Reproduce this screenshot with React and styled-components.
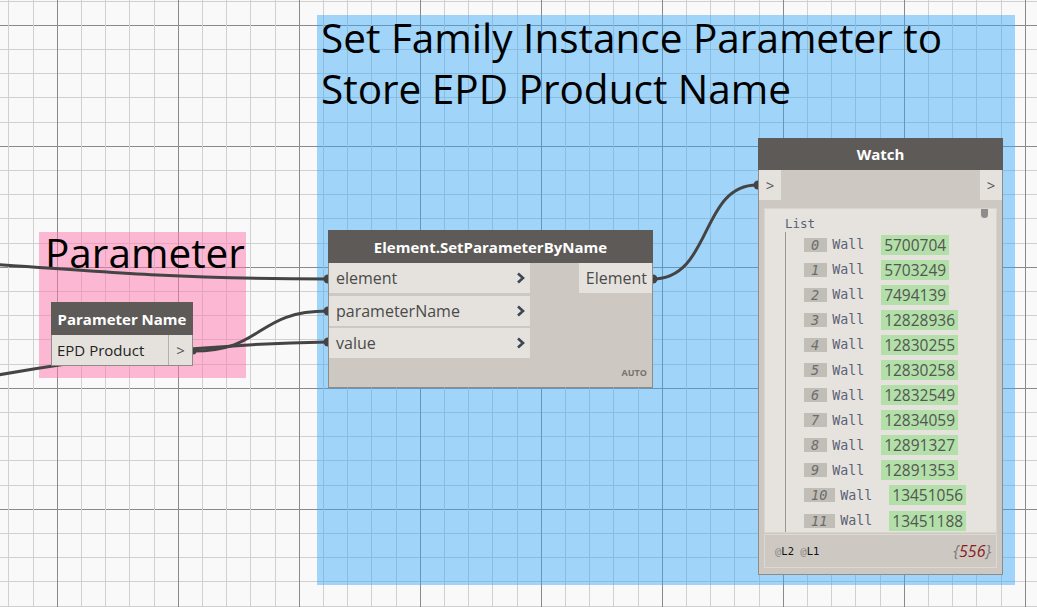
import styled, { createGlobalStyle } from "styled-components";

const GlobalStyle = createGlobalStyle`
  html, body {
    margin: 0;
    padding: 0;
    overflow: hidden;
  }
`;

const watchItems = [
  "5700704",
  "5703249",
  "7494139",
  "12828936",
  "12830255",
  "12830258",
  "12832549",
  "12834059",
  "12891327",
  "12891353",
  "13451056",
  "13451188",
];

function Chevron() {
  return (
    <svg width="9" height="12" viewBox="0 0 9 12">
      <polyline
        points="2,1.5 7,6 2,10.5"
        fill="none"
        stroke="#3c4654"
        strokeWidth="2.6"
        strokeLinejoin="miter"
      />
    </svg>
  );
}

export default function App() {
  return (
    <>
      <GlobalStyle />
      <Canvas>
        <Group $x={317} $y={15} $w={698} $h={570} $pad={4} $color="rgba(51, 167, 247, 0.45)">
          <GroupTitle $offset={-3}>
            Set Family Instance Parameter to
            <br />
            Store EPD Product Name
          </GroupTitle>
        </Group>
        <Group $x={39} $y={232} $w={207} $h={146} $pad={6} $color="rgba(255, 119, 171, 0.5)">
          <GroupTitle $offset={-5}>Parameter</GroupTitle>
        </Group>

        <Wires width="1037" height="607">
          <g fill="none" stroke="#444" strokeWidth="3" strokeLinecap="round">
            <path d="M -120 256 C 150 276, 200 279, 328 279" />
            <path d="M -30 380 C 90 358, 200 344, 328 342" />
            <path d="M 193 351 C 265 351, 255 311, 328 311" />
            <path d="M 653 279 C 712 279, 700 185, 757 185" />
          </g>
          <g fill="#444">
            <circle cx="328" cy="279" r="4.5" />
            <circle cx="328" cy="311" r="4.5" />
            <circle cx="328" cy="342" r="4.5" />
            <circle cx="653" cy="279" r="4.5" />
            <circle cx="758" cy="185" r="4.5" />
            <circle cx="193" cy="351" r="3.5" />
          </g>
        </Wires>

        <Node $x={51} $y={302} $w={142}>
          <NodeHeader $h={33}>Parameter Name</NodeHeader>
          <StringBody>
            <StringInput>EPD Product</StringInput>
            <PortArrow $w={23}>&gt;</PortArrow>
          </StringBody>
        </Node>

        <Node $x={328} $y={230} $w={325}>
          <NodeHeader $h={33}>Element.SetParameterByName</NodeHeader>
          <NodeBody>
            <Inputs>
              {["element", "parameterName", "value"].map((name) => (
                <InputRow key={name}>
                  <span>{name}</span>
                  <Chevron />
                </InputRow>
              ))}
            </Inputs>
            <Outputs>
              <OutputRow>Element</OutputRow>
            </Outputs>
          </NodeBody>
          <Lacing>AUTO</Lacing>
        </Node>

        <Node $x={758} $y={138} $w={245}>
          <NodeHeader $h={32}>Watch</NodeHeader>
          <WatchPorts>
            <PortArrow $w={22}>&gt;</PortArrow>
            <PortArrow $w={22}>&gt;</PortArrow>
          </WatchPorts>
          <WatchPanel>
            <ScrollThumb />
            <ListLabel>List</ListLabel>
            <ListTree>
              {watchItems.map((value, i) => (
                <ListRow key={i}>
                  <IndexBox>{i}</IndexBox>
                  <TypeLabel>Wall</TypeLabel>
                  <ValueBox>{value}</ValueBox>
                </ListRow>
              ))}
            </ListTree>
          </WatchPanel>
          <WatchFooter>
            <Levels>
              <span>@</span>
              <b>L2</b> <span>@</span>
              <b>L1</b>
            </Levels>
            <Count>
              {"{"}
              <em>556</em>
              {"}"}
            </Count>
          </WatchFooter>
        </Node>
      </Canvas>
    </>
  );
}

const Canvas = styled.div`
  position: relative;
  width: 1037px;
  height: 607px;
  overflow: hidden;
  background-color: #f9f9f9;
  background-image: linear-gradient(
      to right,
      #8a8a8a 0 1px,
      transparent 1px 24px,
      #d0d0d0 24px 25px,
      transparent 25px 48px,
      #d0d0d0 48px 49px,
      transparent 49px 72px,
      #d0d0d0 72px 73px,
      transparent 73px 97px,
      #d0d0d0 97px 98px,
      transparent 98px
    ),
    linear-gradient(
      to bottom,
      #8a8a8a 0 1px,
      transparent 1px 24px,
      #d0d0d0 24px 25px,
      transparent 25px 48px,
      #d0d0d0 48px 49px,
      transparent 49px 72px,
      #d0d0d0 72px 73px,
      transparent 73px 97px,
      #d0d0d0 97px 98px,
      transparent 98px
    );
  background-size: 121px 121px;
  background-position: 57px 25px;
  font-family: "Open Sans", "Noto Sans", sans-serif;
`;

const Group = styled.div`
  position: absolute;
  left: ${({ $x }) => $x}px;
  top: ${({ $y }) => $y}px;
  width: ${({ $w }) => $w}px;
  height: ${({ $h }) => $h}px;
  background: ${({ $color }) => $color};
  padding: 0 ${({ $pad }) => $pad}px;
  box-sizing: border-box;
`;

const GroupTitle = styled.div`
  margin-top: ${({ $offset }) => $offset}px;
  font-family: "Open Sans", "Noto Sans", sans-serif;
  font-size: 40.5px;
  line-height: 51px;
  color: #000;
  white-space: nowrap;
`;

const Wires = styled.svg`
  position: absolute;
  left: 0;
  top: 0;
`;

const Node = styled.div`
  position: absolute;
  left: ${({ $x }) => $x}px;
  top: ${({ $y }) => $y}px;
  width: ${({ $w }) => $w}px;
  box-sizing: border-box;
  background: #cdc9c2;
  border: 1px solid #8f8c88;
  display: flex;
  flex-direction: column;
`;

const NodeHeader = styled.div`
  height: ${({ $h }) => $h}px;
  background: #5d5a57;
  color: #fff;
  font-weight: 700;
  font-size: 15px;
  display: flex;
  align-items: center;
  justify-content: center;
  margin: -1px -1px 0;
`;

const StringBody = styled.div`
  display: flex;
  height: 30px;
`;

const StringInput = styled.div`
  flex: 1;
  background: #e5e2dd;
  border-right: 1px solid #b4b0aa;
  font-size: 15px;
  color: #222;
  display: flex;
  align-items: center;
  padding-left: 5px;
`;

const PortArrow = styled.div`
  width: ${({ $w }) => $w}px;
  background: #e5e2dd;
  color: #555;
  font-size: 15px;
  display: flex;
  align-items: center;
  justify-content: center;
`;

const NodeBody = styled.div`
  display: flex;
  justify-content: space-between;
`;

const Inputs = styled.div`
  width: 201px;
  display: flex;
  flex-direction: column;
  gap: 2.5px;
`;

const InputRow = styled.div`
  height: 30px;
  background: #e5e2dd;
  display: flex;
  align-items: center;
  justify-content: space-between;
  padding: 0 5px 0 7px;
  font-size: 16px;
  color: #4a4a4a;
`;

const Outputs = styled.div`
  display: flex;
  flex-direction: column;
`;

const OutputRow = styled.div`
  height: 30px;
  width: 73px;
  box-sizing: border-box;
  background: #e5e2dd;
  display: flex;
  align-items: center;
  justify-content: flex-end;
  padding-right: 5px;
  font-size: 16px;
  color: #4a4a4a;
`;

const Lacing = styled.div`
  height: 29px;
  display: flex;
  align-items: flex-end;
  justify-content: flex-end;
  padding: 0 5px 8px 0;
  box-sizing: border-box;
  font-size: 9px;
  font-weight: 700;
  color: #77726d;
`;

const WatchPorts = styled.div`
  display: flex;
  justify-content: space-between;
  height: 30px;
`;

const WatchPanel = styled.div`
  position: relative;
  margin: 8px 5px 0;
  height: 325px;
  background: #e6e3de;
  border: 1px solid #d8d4ce;
  box-sizing: border-box;
  overflow: hidden;
  padding: 6px 0 0 20px;
  font-family: "DejaVu Sans Mono", "Liberation Mono", monospace;
`;

const ScrollThumb = styled.div`
  position: absolute;
  right: 8px;
  top: 0;
  width: 7px;
  height: 9px;
  border-radius: 0 0 4px 4px;
  background: #8d8d8d;
`;

const ListLabel = styled.div`
  font-size: 12.5px;
  line-height: 17px;
  color: #5b6275;
`;

const ListTree = styled.div`
  border-left: 1px solid #9a9792;
  padding-left: 18px;
  display: flex;
  flex-direction: column;
`;

const ListRow = styled.div`
  height: 25.1px;
  display: flex;
  align-items: center;
  gap: 5px;
`;

const IndexBox = styled.span`
  background: #c1bdb7;
  color: #6c6c6c;
  font-style: italic;
  font-size: 13.5px;
  line-height: 14px;
  padding: 0 8px 0 7px;
`;

const TypeLabel = styled.span`
  width: 44px;
  font-size: 13.3px;
  color: #5b6275;
`;

const ValueBox = styled.span`
  background: #b2e0a8;
  font-family: "Open Sans", "Noto Sans", sans-serif;
  font-size: 15.5px;
  line-height: 20px;
  color: #555;
  padding: 0 3px;
`;

const WatchFooter = styled.div`
  margin: 1px 5px 6px;
  height: 34px;
  box-sizing: border-box;
  border: 1px solid #dcd8d2;
  display: flex;
  align-items: center;
  justify-content: space-between;
  padding: 0 5px 0 10px;
`;

const Levels = styled.div`
  font-family: "DejaVu Sans Mono", "Liberation Mono", monospace;
  font-size: 10.5px;
  color: #111;
  span {
    color: #888;
  }
  b {
    font-weight: 400;
  }
`;

const Count = styled.div`
  font-size: 16px;
  font-style: italic;
  color: #7a7a7a;
  em {
    color: #8b1c1c;
  }
`;
